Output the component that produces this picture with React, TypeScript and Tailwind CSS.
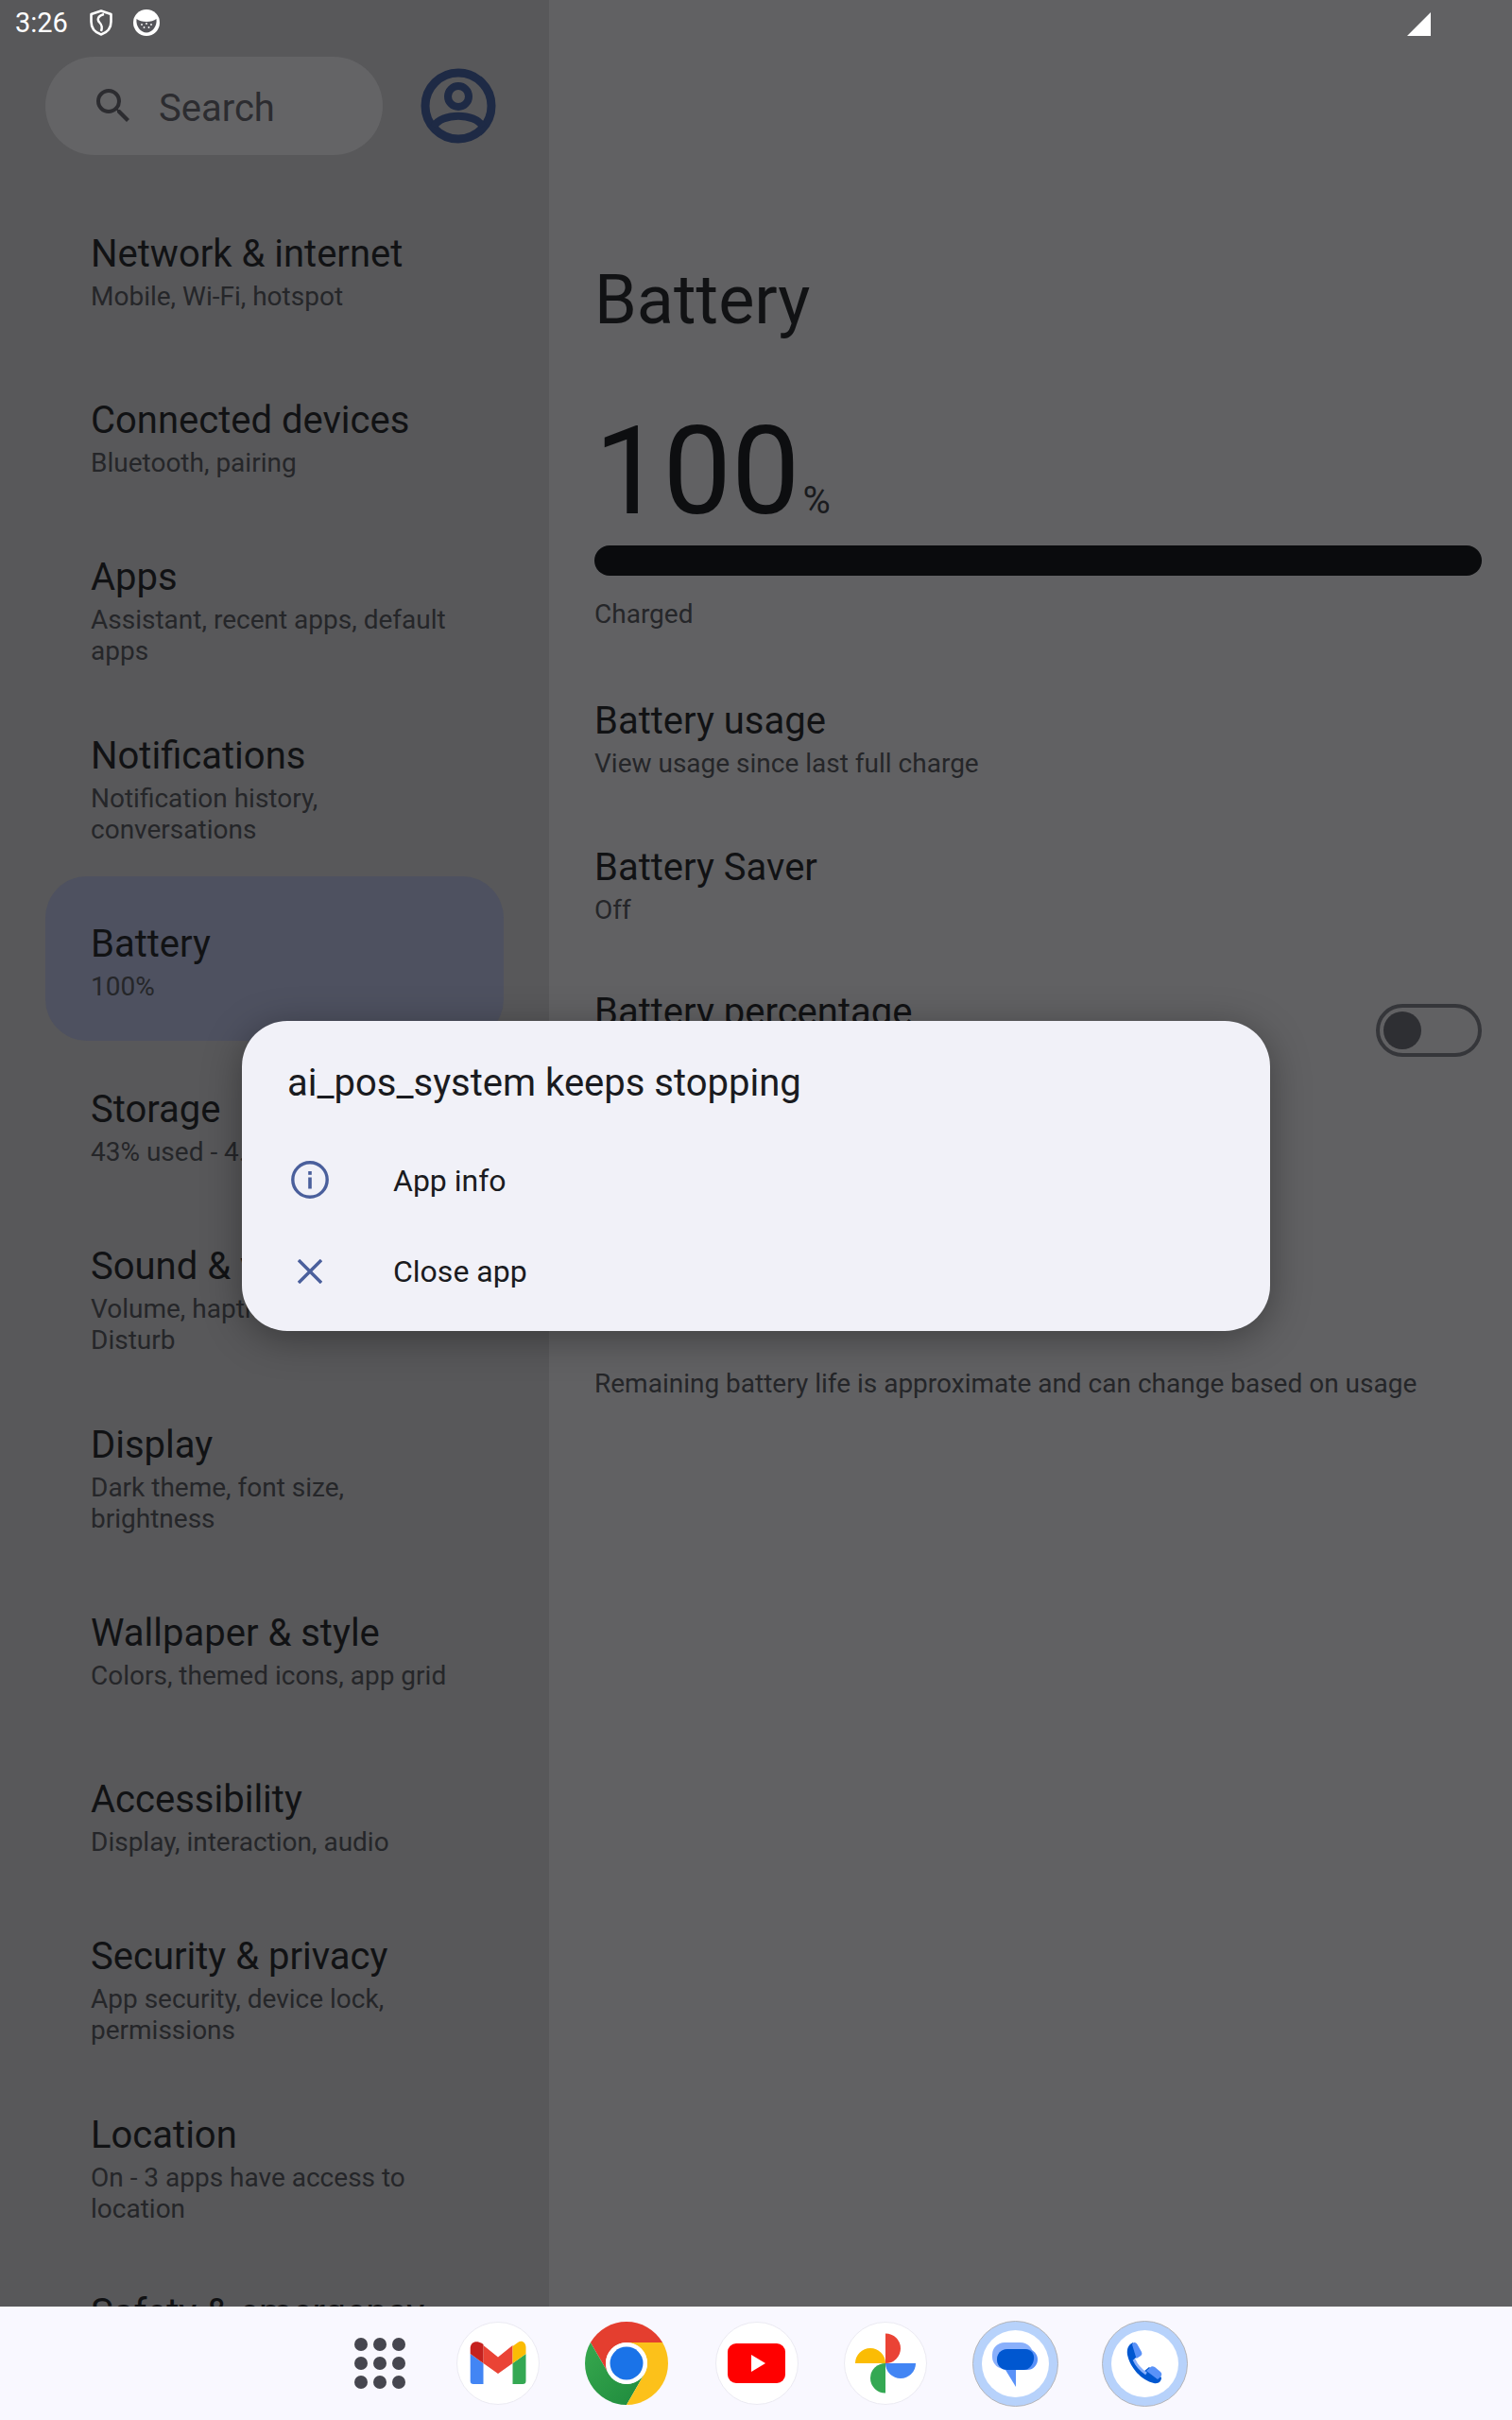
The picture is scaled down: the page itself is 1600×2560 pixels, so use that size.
const rows: [string, string[], boolean?][] = [
  ["Network & internet", ["Mobile, Wi-Fi, hotspot"]],
  ["Connected devices", ["Bluetooth, pairing"]],
  ["Apps", ["Assistant, recent apps, default", "apps"]],
  ["Notifications", ["Notification history,", "conversations"]],
  ["Battery", ["100%"], true],
  ["Storage", ["43% used - 4.6 GB free"]],
  ["Sound & vibration", ["Volume, haptics, Do Not", "Disturb"]],
  ["Display", ["Dark theme, font size,", "brightness"]],
  ["Wallpaper & style", ["Colors, themed icons, app grid"]],
  ["Accessibility", ["Display, interaction, audio"]],
  ["Security & privacy", ["App security, device lock,", "permissions"]],
  ["Location", ["On - 3 apps have access to", "location"]],
];

function RowText({ title, sub }: { title: string; sub: string[] }) {
  return (
    <>
      <div className="text-[40px] leading-[46px] text-[#111214]">{title}</div>
      <div className="mt-[5px]">
        {sub.map((s) => (
          <div key={s} className="text-[28px] leading-[33px] text-[#252629]">{s}</div>
        ))}
      </div>
    </>
  );
}

function NavRow({ title, sub, active }: { title: string; sub: string[]; active?: boolean }) {
  if (active) {
    return (
      <div className="shrink-0 h-[174px] -mt-[3px] mb-[4px] mx-[48px] pl-[48px] pt-[8px] rounded-[44px] bg-[#4e5160] flex flex-col justify-center">
        <RowText title={title} sub={sub} />
      </div>
    );
  }
  return (
    <div className={`shrink-0 flex flex-col justify-center pl-[96px] ${sub.length > 1 ? "h-[189px]" : "h-[176px]"}`}>
      <RowText title={title} sub={sub} />
    </div>
  );
}

function PaneRow({ title, sub }: { title: string; sub: string }) {
  return (
    <div className="h-[155px] flex flex-col justify-center">
      <RowText title={title} sub={[sub]} />
    </div>
  );
}

function Gmail() {
  return (
    <svg viewBox="0 0 88 88" className="w-[88px] h-[88px]">
      <circle cx="44" cy="44" r="43.5" fill="#fff" stroke="#ebeaf2" />
      <path d="M14.7 34 L28.5 44 V66 H18 a3.3 3.3 0 0 1-3.3-3.3 Z" fill="#4285f4" />
      <path d="M59.5 44 L73.5 34 V62.7 a3.3 3.3 0 0 1-3.3 3.3 H59.5 Z" fill="#34a853" />
      <path d="M28.5 25 L44 37.5 L59.5 25 V44 L44 55 L28.5 44 Z" fill="#ea4335" />
      <path d="M14.7 34 V28 C14.7 21 22 19 28.5 24 V44 Z" fill="#c5221f" />
      <path d="M59.5 26 L65 22 C69 19 73.5 22 73.5 27 V34 L59.5 44 Z" fill="#fbbc04" />
    </svg>
  );
}

function Chrome() {
  return (
    <svg viewBox="0 0 88 88" className="w-[88px] h-[88px]">
      <defs>
        <linearGradient id="cg" x1="0" y1="0" x2="1" y2="1">
          <stop offset="0" stopColor="#37a84e" />
          <stop offset="1" stopColor="#1e8a3d" />
        </linearGradient>
      </defs>
      <path d="M5.9 22 A44 44 0 0 1 82.1 22 L44 22 A22 22 0 0 0 25 55 Z" fill="#e43e2f" />
      <path d="M5.9 22 L25 55 A22 22 0 0 0 63 55 L44 88 A44 44 0 0 1 5.9 22 Z" fill="url(#cg)" />
      <path d="M82.1 22 H44 A22 22 0 0 1 63 55 L44 88 A44 44 0 0 0 82.1 22 Z" fill="#fcc11a" />
      <circle cx="44" cy="44" r="22" fill="#fff" />
      <circle cx="44" cy="44" r="17.5" fill="#1a73e8" />
    </svg>
  );
}

function YouTube() {
  return (
    <svg viewBox="0 0 88 88" className="w-[88px] h-[88px]">
      <circle cx="44" cy="44" r="43.5" fill="#fff" stroke="#ebeaf2" />
      <rect x="13" y="23" width="61" height="42" rx="9" fill="#ff0000" />
      <path d="M38 35 L53 44 L38 53 Z" fill="#fff" />
    </svg>
  );
}

function Photos() {
  return (
    <svg viewBox="0 0 88 88" className="w-[88px] h-[88px]">
      <circle cx="44" cy="44" r="43.5" fill="#fff" stroke="#ebeaf2" />
      <path d="M44 12.5 A16 15.75 0 0 1 44 44 Z" fill="#ea4335" />
      <path d="M76 44 A16 16 0 0 1 44 44 Z" fill="#4285f4" />
      <path d="M44 75.5 A16 15.75 0 0 1 44 44 Z" fill="#34a853" />
      <path d="M12 44 A16 16 0 0 1 44 44 Z" fill="#fbbc04" />
    </svg>
  );
}

function Messages() {
  return (
    <svg viewBox="0 0 91 91" className="w-[91px] h-[91px]">
      <circle cx="45.5" cy="45.5" r="45" fill="#b7d2fb" stroke="#b5b5b8" />
      <circle cx="45.5" cy="45.5" r="35.5" fill="#fff" />
      <rect x="21" y="23" width="43" height="28" rx="13" fill="#8ab0fb" />
      <rect x="26" y="30" width="43" height="22" rx="11" fill="#5a92f8" />
      <path d="M35 52 L46 70 V52 Z" fill="#5a92f8" />
      <path d="M37 30 H56 C62 30 66 35 65 41 C64 47 60 52 54 52 H37 C30 52 26 47 26 41 C26 35 30 30 37 30 Z" fill="#0057d0" />
    </svg>
  );
}

function Phone() {
  return (
    <svg viewBox="0 0 91 91" className="w-[91px] h-[91px]">
      <circle cx="45.5" cy="45.5" r="45" fill="#b7d2fb" stroke="#b5b5b8" />
      <circle cx="45.5" cy="45.5" r="35.5" fill="#fff" />
      <path d="M33 23 C28 25 26 30 27 36 C30 50 42 63 55 66 C60 67 63 64 63 60 L50 49 L44 54 C38 50 35 45 34 41 L38 37 Z" fill="#0057d0" />
      <path d="M32 25 C34 22 36 23 37.5 25 L42 33 C43 35 42 36.5 40.5 37.5 L36.5 40 Z" fill="#5a92f8" />
      <path d="M47 53 L51 49.5 C52.5 48 54 48 56 49 L62 54 C64 56 63.5 58 62 59.5 L59 62 Z" fill="#5a92f8" />
      <path d="M34 41 C37 48 41 52 47 56" fill="none" stroke="#8ab0fb" strokeWidth="3" />
    </svg>
  );
}

export default function App() {
  return (
    <div className="relative w-[1600px] h-[2560px] overflow-hidden flex flex-col font-['Roboto',sans-serif] bg-[#616163]">
      <div className="flex-1 min-h-0 flex">
        {/* sidebar */}
        <aside className="w-[581px] shrink-0 bg-[#58585a] flex flex-col overflow-hidden">
          <div className="h-[48px] shrink-0 flex items-center pl-[16px]">
            <span className="text-white text-[29px] leading-[32px]">3:26</span>
            <svg viewBox="0 0 24 28" className="w-[24px] h-[28px] ml-[23px]">
              <path d="M12 1.5 L22.5 5 V13 C22.5 20 18 24.5 12 26.5 C6 24.5 1.5 20 1.5 13 V5 Z" fill="none" stroke="#fff" strokeWidth="2.6" strokeLinejoin="round" />
              <path d="M15 5 C8 7 7.5 11 10.5 14 C13 16.5 13.5 19 12 23" fill="none" stroke="#fff" strokeWidth="2.4" />
            </svg>
            <svg viewBox="0 0 28 28" className="w-[28px] h-[28px] ml-[22px]">
              <circle cx="14" cy="14" r="14" fill="#fff" />
              <path d="M3.5 10 C8 14 20 14 24.5 10 C25.5 18 20 24.5 14 24.5 C8 24.5 2.5 18 3.5 10 Z" fill="#55555a" />
              <circle cx="9" cy="16" r="0.9" fill="#fff" />
              <circle cx="14" cy="15" r="0.9" fill="#fff" />
              <circle cx="19" cy="16" r="0.9" fill="#fff" />
              <circle cx="11.5" cy="19" r="0.9" fill="#fff" />
              <circle cx="16.5" cy="19" r="0.9" fill="#fff" />
            </svg>
          </div>
          <div className="h-[152px] shrink-0 pt-[12px] pl-[48px] flex items-start">
            <div className="w-[357px] h-[104px] rounded-full bg-[#646466] flex items-center pl-[48px]">
              <svg viewBox="0 0 24 24" className="w-[48px] h-[48px] text-[#2c2c30]" fill="currentColor">
                <path d="M15.5 14h-.79l-.28-.27A6.47 6.47 0 0 0 16 9.5 6.5 6.5 0 1 0 9.5 16c1.61 0 3.09-.59 4.23-1.57l.27.28v.79l5 4.99L20.49 19l-4.99-5zm-6 0C7.01 14 5 11.99 5 9.5S7.01 5 9.5 5 14 7.01 14 9.5 11.99 14 9.5 14z" />
              </svg>
              <span className="ml-[24px] mt-[5px] text-[40px] leading-[48px] text-[#2c2c30]">Search</span>
            </div>
            <svg viewBox="0 0 80 80" className="w-[80px] h-[80px] ml-[40px] mt-[12px]">
              <circle cx="40" cy="40" r="35" fill="none" stroke="#1e2a45" strokeWidth="9" />
              <circle cx="40" cy="30" r="11" fill="none" stroke="#1e2a45" strokeWidth="8" />
              <path d="M14 62 C22 47 58 47 66 62" fill="none" stroke="#1e2a45" strokeWidth="8" />
            </svg>
          </div>
          {rows.map(([t, s, a]) => (
            <NavRow key={t} title={t} sub={s} active={a} />
          ))}
          <div className="shrink-0 pl-[96px] pt-[35px] text-[40px] leading-[46px] text-[#111214]">Safety & emergency</div>
        </aside>
        {/* pane */}
        <main className="flex-1 min-w-0 pl-[48px] pr-[32px] flex flex-col overflow-hidden">
          <div className="h-[50px] shrink-0 flex items-center justify-end pr-[54px]">
            <svg viewBox="0 0 25 25" className="w-[25px] h-[25px]">
              <path d="M0 25 L25 0 V25 Z" fill="#fff" />
            </svg>
          </div>
          <h1 className="mt-[226px] text-[72px] leading-[84px] text-[#111214]">Battery</h1>
          <div className="mt-[73px] flex items-baseline h-[132px]">
            <span className="text-[129px] leading-[132px] text-[#0d0e10]">100</span>
            <span className="ml-[3px] text-[40px] leading-[40px] text-[#1a1b1e]">%</span>
          </div>
          <div className="mt-[12px] h-[32px] rounded-full bg-[#0a0b0d]" />
          <div className="mt-[23px] text-[28px] leading-[36px] text-[#252629]">Charged</div>
          <div className="mt-[36px]">
            <PaneRow title="Battery usage" sub="View usage since last full charge" />
            <PaneRow title="Battery Saver" sub="Off" />
          </div>
          <div className="mt-[34px] flex items-start justify-between">
            <div className="text-[40px] leading-[46px] text-[#111214]">Battery percentage</div>
            <div className="w-[112px] h-[56px] mt-[14px] rounded-full border-[4px] border-[#35363a] flex items-center pl-[4px]">
              <div className="w-[40px] h-[40px] rounded-full bg-[#2e2f33]" />
            </div>
          </div>
          <div className="mt-[328px] text-[28px] leading-[36px] text-[#252629]">Remaining battery life is approximate and can change based on usage</div>
        </main>
      </div>
      {/* dock */}
      <div className="h-[120px] shrink-0 bg-[#f9f8ff] flex items-center pl-[358px]">
        <div className="w-[88px] grid grid-cols-3 gap-[6px] justify-items-center px-[17px]">
          {Array.from({ length: 9 }).map((_, i) => (
            <div key={i} className="w-[14px] h-[14px] rounded-full bg-[#46464f]" />
          ))}
        </div>
        <div className="ml-[37px] flex items-center gap-[48px]">
          <Gmail />
          <Chrome />
          <div className="ml-[2px]"><YouTube /></div>
          <Photos />
          <Messages />
          <div className="-ml-[2px]"><Phone /></div>
        </div>
      </div>
      {/* crash dialog */}
      <div className="absolute left-[256px] top-[1080px] w-[1088px] h-[328px] rounded-[48px] bg-[#f1f1f8] shadow-[0_8px_40px_rgba(0,0,0,0.35)] flex flex-col pl-[48px]">
        <div className="mt-[41px] text-[40px] leading-[50px] text-[#1a1b20]">ai_pos_system keeps stopping</div>
        <div className="mt-[30px] h-[96px] flex items-center">
          <svg viewBox="0 0 40 40" className="w-[40px] h-[40px] ml-[4px] -mt-[2px] text-[#4a5f9c]">
            <circle cx="20" cy="20" r="18.2" fill="none" stroke="currentColor" strokeWidth="3.4" />
            <rect x="18.2" y="17.5" width="3.6" height="12" fill="currentColor" />
            <rect x="18.2" y="11" width="3.6" height="3.8" fill="currentColor" />
          </svg>
          <span className="ml-[68px] text-[32px] leading-[40px] text-[#1a1b20]">App info</span>
        </div>
        <div className="h-[96px] flex items-center">
          <svg viewBox="0 0 26 26" className="w-[26px] h-[26px] ml-[11px] text-[#4a5f9c]">
            <path d="M1 1 L25 25 M25 1 L1 25" fill="none" stroke="currentColor" strokeWidth="3.4" />
          </svg>
          <span className="ml-[75px] text-[32px] leading-[40px] text-[#1a1b20]">Close app</span>
        </div>
      </div>
    </div>
  );
}
